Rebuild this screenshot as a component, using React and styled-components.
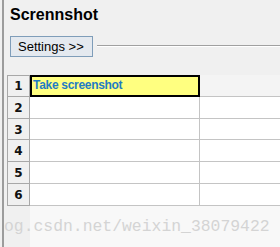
import { createGlobalStyle } from 'styled-components'
import styled from 'styled-components'

const GlobalStyle = createGlobalStyle`
	html, body {
		margin: 0;
		padding: 0;
		background: #f0f0f0;
		overflow: hidden;
	}
	body {
		font-family: 'Liberation Sans', Arial, sans-serif;
	}
`

const rows = ['Take screenshot', '', '', '', '', '']

function App() {
	return (
		<>
			<GlobalStyle />
			<Window>
				<Title>Scrennshot</Title>
				<Toolbar>
					<SettingsButton>Settings &gt;&gt;</SettingsButton>
					<Etched />
				</Toolbar>
				<Sheet>
					{rows.map((text, i) => (
						<Row key={i}>
							<RowHeader first={i === 0}>{i + 1}</RowHeader>
							<Cell selected={i === 0}>{text}</Cell>
							<Cell muted={i === 0} last />
						</Row>
					))}
					<Row fill>
						<RowHeader filler />
						<Blank />
					</Row>
				</Sheet>
				<Watermark>og.csdn.net/weixin_38079422</Watermark>
			</Window>
		</>
	)
}

export default App

const Window = styled.div`
	position: relative;
	display: flex;
	flex-direction: column;
	height: 247px;
	margin-left: 2px;
	border-left: 2px solid #9c9c9c;
	box-sizing: border-box;
`

const Title = styled.h1`
	margin: 5px 0 0 6px;
	font-size: 16px;
	line-height: 20px;
	font-weight: bold;
	color: #000;
`

const Toolbar = styled.div`
	display: flex;
	align-items: center;
	margin: 11px 0 0 6px;
`

const SettingsButton = styled.button`
	height: 21px;
	width: 83px;
	padding: 0 0 0 7px;
	text-align: left;
	border: 1px solid #7f9db9;
	background: #e4e9ef;
	font-family: 'Liberation Sans', Arial, sans-serif;
	font-size: 13px;
	color: #000;
	border-radius: 0;
`

const Etched = styled.div`
	flex: 1;
	margin-left: 4px;
	border-top: 1px solid #a0a0a0;
	border-bottom: 1px solid #ffffff;
	margin-top: -1px;
`

const Sheet = styled.div`
	flex: 1;
	display: flex;
	flex-direction: column;
	margin: 18px 0 0 3px;
`

const Row = styled.div`
	display: flex;
	height: ${(p) => (p.fill ? 'auto' : '21.8px')};
	flex: ${(p) => (p.fill ? 1 : 'none')};
`

const RowHeader = styled.div`
	width: 23px;
	flex: none;
	box-sizing: border-box;
	display: flex;
	justify-content: center;
	padding-top: ${(p) => (p.first ? '4px' : '5px')};
	background: #f0f0f0;
	border-top: ${(p) => (p.first ? '1px solid #a8a8a8' : 'none')};
	border-left: ${(p) => (p.filler ? 'none' : '1px solid #a8a8a8')};
	border-right: ${(p) => (p.filler ? 'none' : '1px solid #a8a8a8')};
	border-bottom: ${(p) => (p.filler ? 'none' : '1px solid #a8a8a8')};
	font-family: 'DejaVu Sans', sans-serif;
	font-weight: bold;
	font-size: 12px;
	line-height: 13px;
	color: #111;
`

const Cell = styled.div`
	box-sizing: border-box;
	width: ${(p) => (p.last ? 'auto' : '170px')};
	flex: ${(p) => (p.last ? 1 : 'none')};
	padding: 2px 0 0 3px;
	background: ${(p) => (p.selected ? '#ffff80' : p.muted ? '#f4f4f4' : '#ffffff')};
	border: ${(p) => (p.selected ? '2px solid #000' : 'none')};
	border-right: ${(p) => (p.selected ? '2px solid #000' : p.last ? 'none' : '1px solid #c4c4c4')};
	border-bottom: ${(p) => (p.selected ? '2px solid #000' : '1px solid #c4c4c4')};
	padding-left: ${(p) => (p.selected ? '1px' : '3px')};
	font-weight: bold;
	font-size: 12px;
	letter-spacing: -0.3px;
	line-height: 13px;
	color: #1f7cc4;
`

const Blank = styled.div`
	flex: 1;
	background: #f8f8f8;
`

const Watermark = styled.div`
	position: absolute;
	left: 0;
	top: 218px;
	font-family: 'Liberation Mono', 'Courier New', monospace;
	font-size: 16.4px;
	line-height: 17px;
	color: #d4d4d4;
	white-space: nowrap;
	pointer-events: none;
`
